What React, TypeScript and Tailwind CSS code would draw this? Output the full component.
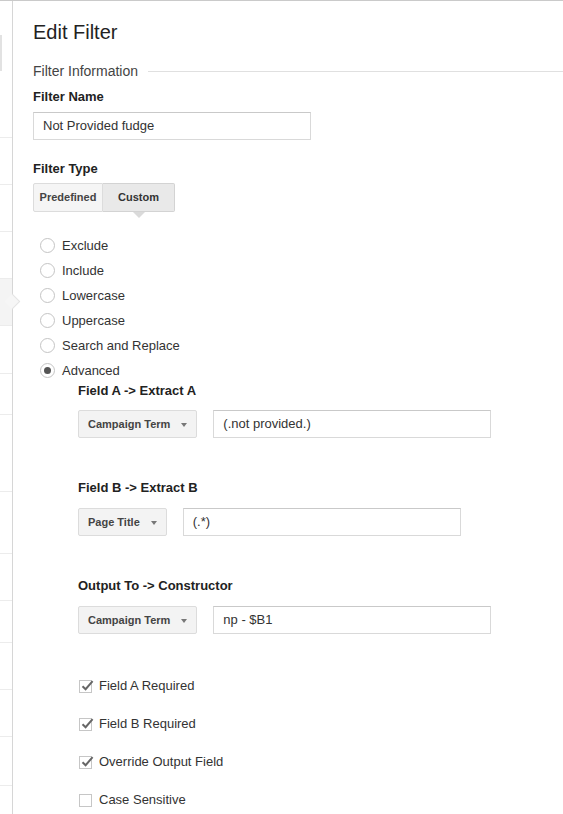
import React from 'react';

const sideRows = [
  { h: 137, hl: false },
  { h: 47, hl: false },
  { h: 47, hl: false },
  { h: 47, hl: false },
  { h: 47, hl: true },
  { h: 48, hl: false },
  { h: 41, hl: false },
  { h: 77, hl: false },
  { h: 62, hl: false },
  { h: 47, hl: false },
  { h: 42, hl: false },
  { h: 47, hl: false },
  { h: 47, hl: false },
  { h: 49, hl: false },
];

function Sidebar() {
  return (
    <div className="w-[12px] shrink-0 flex flex-col">
      {sideRows.map((r, i) => (
        <div
          key={i}
          style={{ height: r.h }}
          className={`relative border-b border-[#ececec] ${r.hl ? 'bg-[#f4f4f4]' : ''}`}
        >
          {i === 0 && <div className="absolute left-0 top-[34px] h-[36px] w-[2px] bg-[#e2e2e2]" />}
          {r.hl && (
            <div className="absolute left-[7px] top-[17px] z-10 h-[11px] w-[11px] rotate-45 border-t border-r border-[#e3e3e3] bg-[#f6f6f6]" />
          )}
        </div>
      ))}
    </div>
  );
}

function Radio({ label, checked }: { label: string; checked?: boolean }) {
  return (
    <div className="flex h-[25px] items-center">
      <span className="flex h-[15px] w-[15px] items-center justify-center rounded-full border border-[#c4c4c4] bg-white">
        {checked && <span className="h-[7px] w-[7px] rounded-full bg-[#555]" />}
      </span>
      <span className="ml-[7px] text-[13px] leading-[25px] text-[#333]">{label}</span>
    </div>
  );
}

function Dropdown({ label }: { label: string }) {
  return (
    <div className="flex h-[28px] items-center gap-[11px] rounded-[2px] border border-[#dcdcdc] bg-[#f3f3f3] px-[9px]">
      <span className="text-[11px] font-bold text-[#444]">{label}</span>
      <span className="mt-[2px] h-0 w-0 border-x-[3.5px] border-t-[4px] border-x-transparent border-t-[#777]" />
    </div>
  );
}

function TextBox({ value }: { value: string }) {
  return (
    <div className="flex h-[28px] w-[278px] items-center border border-[#d9d9d9] border-t-[#c9c9c9] bg-white px-[9px] text-[13px] text-[#333]">
      {value}
    </div>
  );
}

function Check({ label, checked }: { label: string; checked?: boolean }) {
  return (
    <div className="flex h-[38px] items-center">
      <span className="relative h-[13px] w-[13px] border border-[#c6c6c6] bg-white">
        {checked && (
          <svg className="absolute left-[0px] top-[-3px]" width="15" height="15" viewBox="0 0 15 15">
            <path d="M2.5 8.2 L5.6 11.2 L12.6 3.2" fill="none" stroke="#666" strokeWidth="2" />
          </svg>
        )}
      </span>
      <span className="ml-[7px] text-[13px] text-[#333]">{label}</span>
    </div>
  );
}

export default function App() {
  return (
    <div className="flex min-h-[814px] border-t border-[#cacaca] bg-white font-['Liberation_Sans',Arial,sans-serif]">
      <Sidebar />
      <main className="flex-1 border-l border-[#d6d6d6] pl-[20px]">
        <h1 className="mt-[19px] text-[20px] leading-[24px] text-[#222]">Edit Filter</h1>

        <div className="mt-[17px] flex items-center">
          <span className="text-[14px] leading-[20px] text-[#444]">Filter Information</span>
          <span className="ml-[10px] h-px flex-1 bg-[#e0e0e0]" />
        </div>

        <p className="mt-[8px] text-[13px] font-bold leading-[16px] text-[#222]">Filter Name</p>
        <div className="mt-[7px]">
          <TextBox value="Not Provided fudge" />
        </div>

        <p className="mt-[21px] text-[13px] font-bold leading-[16px] text-[#222]">Filter Type</p>
        <div className="mt-[6px] flex">
          <div className="flex h-[29px] w-[70px] items-center justify-center rounded-l-[2px] border border-[#dcdcdc] bg-[#f5f5f5] text-[11px] font-bold text-[#444]">
            Predefined
          </div>
          <div className="relative flex h-[29px] w-[72px] items-center justify-center rounded-r-[2px] border border-l-0 border-[#d3d3d3] bg-[#e9e9e9] text-[11px] font-bold text-[#333]">
            Custom
            <span className="absolute left-[30px] top-[28px] h-0 w-0 border-x-[6px] border-t-[6px] border-x-transparent border-t-[#dadada]" />
          </div>
        </div>

        <div className="mt-[21px] pl-[7px]">
          <Radio label="Exclude" />
          <Radio label="Include" />
          <Radio label="Lowercase" />
          <Radio label="Uppercase" />
          <Radio label="Search and Replace" />
          <Radio label="Advanced" checked />
        </div>

        <div className="pl-[45px]">
          <p className="text-[13px] font-bold leading-[16px] text-[#222]">Field A -&gt; Extract A</p>
          <div className="mt-[11px] flex gap-4">
            <Dropdown label="Campaign Term" />
            <TextBox value="(.not provided.)" />
          </div>

          <p className="mt-[42px] text-[13px] font-bold leading-[16px] text-[#222]">Field B -&gt; Extract B</p>
          <div className="mt-[12px] flex gap-4">
            <Dropdown label="Page Title" />
            <TextBox value="(.*)" />
          </div>

          <p className="mt-[42px] text-[13px] font-bold leading-[16px] text-[#222]">Output To -&gt; Constructor</p>
          <div className="mt-[12px] flex gap-4">
            <Dropdown label="Campaign Term" />
            <TextBox value="np - $B1" />
          </div>

          <div className="mt-[33px] pl-px">
            <Check label="Field A Required" checked />
            <Check label="Field B Required" checked />
            <Check label="Override Output Field" checked />
            <Check label="Case Sensitive" />
          </div>
        </div>
      </main>
    </div>
  );
}
